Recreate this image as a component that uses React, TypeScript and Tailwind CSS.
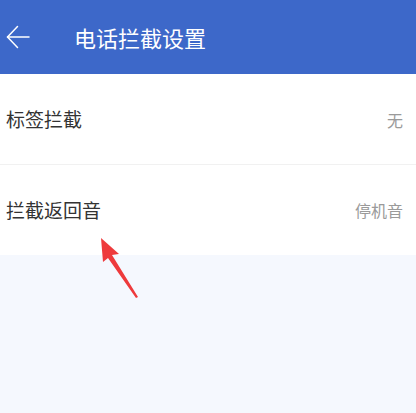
const rows = [
  { label: "标签拦截", value: "无" },
  { label: "拦截返回音", value: "停机音" },
];

export default function App() {
  return (
    <div
      className="relative flex h-[413px] w-[416px] flex-col overflow-hidden bg-[#f5f8fe]"
      style={{ fontFamily: '"Noto Sans CJK SC", "Noto Sans", sans-serif' }}
    >
      <header className="flex h-[74px] shrink-0 items-center bg-[#3d68c9] pl-[6px] text-white">
        <svg width="24" height="24" viewBox="0 0 24 24" fill="none" stroke="currentColor" strokeWidth="1.5" strokeLinecap="round" strokeLinejoin="round">
          <path d="M23 12H1.5" />
          <path d="M11.5 1.5 1.5 12l10 10.5" />
        </svg>
        <h1 className="ml-[44px] text-[22px] leading-none">电话拦截设置</h1>
      </header>

      <div className="flex flex-col bg-white pt-px">
        {rows.map((r, i) => (
          <div
            key={r.label}
            className={`flex h-[90px] items-center justify-between pl-[6px] pr-[13px] ${
              i === 0 ? "border-b border-[#f1f1f1]" : ""
            }`}
          >
            <span className="text-[19px] text-[#333333]">{r.label}</span>
            <span className="text-[16px] text-[#9a9a9a]">{r.value}</span>
          </div>
        ))}
      </div>

      {/* red annotation arrow */}
      <svg
        className="absolute left-[92px] top-[232px]"
        width="56"
        height="72"
        viewBox="0 0 56 72"
      >
        <polygon points="9,6 27,22 20,23 46,65 44,66 16,26 11,30" fill="#ee3a3c" />
      </svg>
    </div>
  );
}
